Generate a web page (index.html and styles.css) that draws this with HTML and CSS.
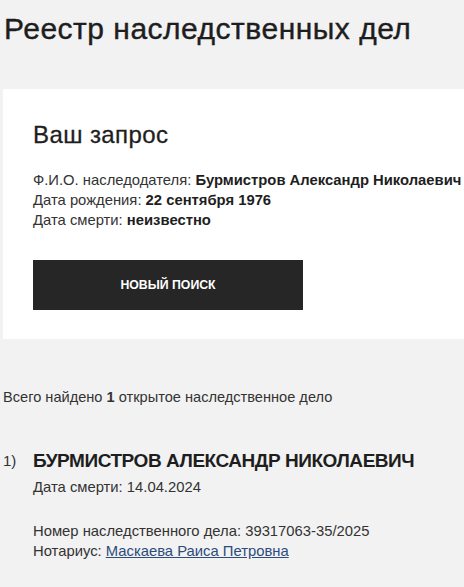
FILE: index.html
```html
<!DOCTYPE html>
<html lang="ru">
<head>
<meta charset="utf-8">
<link rel="stylesheet" href="styles.css">
</head>
<body>
<div class="page">
  <h1 class="title">Реестр наследственных дел</h1>
  <section class="card">
    <h2 class="card-title">Ваш запрос</h2>
    <div class="info">
      <div>Ф.И.О. наследодателя: <b>Бурмистров Александр Николаевич</b></div>
      <div>Дата рождения: <b>22 сентября 1976</b></div>
      <div>Дата смерти: <b>неизвестно</b></div>
    </div>
    <button class="btn">НОВЫЙ ПОИСК</button>
  </section>
  <p class="total">Всего найдено <b>1</b> открытое наследственное дело</p>
  <div class="case">
    <div class="case-num">1)</div>
    <div class="case-body">
      <div class="case-name">БУРМИСТРОВ АЛЕКСАНДР НИКОЛАЕВИЧ</div>
      <div class="case-line">Дата смерти: 14.04.2024</div>
      <div class="case-details">
        <div>Номер наследственного дела: 39317063-35/2025</div>
        <div>Нотариус: <a class="link" href="#">Маскаева Раиса Петровна</a></div>
      </div>
    </div>
  </div>
</div>
</body>
</html>
```
FILE: styles.css
```css
html, body {
  margin: 0;
  padding: 0;
  background: #f2f2f2;
  color: #222;
  font-family: "Liberation Sans", Arial, sans-serif;
}
.page {
  padding: 0 0 0 3px;
  overflow: hidden;
  width: 464px;
  box-sizing: border-box;
}
.title {
  margin: 0;
  padding: 12px 0 0 1px;
  font-size: 30px;
  font-weight: normal;
  letter-spacing: 0.5px;
  line-height: 34px;
  color: #1e1e1e;
  white-space: nowrap;
  -webkit-text-stroke: 0.4px #1e1e1e;
}
.card {
  margin-top: 43px;
  background: #fff;
  padding: 32px 0 29px 30px;
  width: 520px;
}
.card-title {
  margin: 0;
  font-size: 24px;
  font-weight: normal;
  letter-spacing: 0.4px;
  line-height: 28px;
  color: #1e1e1e;
  -webkit-text-stroke: 0.3px #1e1e1e;
}
.info {
  margin-top: 21px;
  font-size: 14.8px;
  line-height: 20px;
  color: #333;
  white-space: nowrap;
}
.info b {
  color: #1e1e1e;
}
.btn {
  display: block;
  margin-top: 30px;
  width: 270px;
  height: 50px;
  border: 0;
  background: #262626;
  color: #fff;
  font-family: "Liberation Sans", Arial, sans-serif;
  font-weight: bold;
  font-size: 12.3px;
}
.total {
  margin: 48px 0 0 0;
  font-size: 14.6px;
  line-height: 20px;
  color: #333;
}
.case {
  display: flex;
  margin-top: 41px;
}
.case-num {
  width: 30px;
  font-size: 15px;
  line-height: 26px;
  color: #333;
}
.case-name {
  font-size: 19px;
  font-weight: bold;
  letter-spacing: -0.45px;
  line-height: 26px;
  color: #1e1e1e;
  white-space: nowrap;
}
.case-line {
  margin-top: 3px;
  font-size: 14.8px;
  line-height: 20px;
  color: #333;
}
.case-details {
  margin-top: 24px;
  font-size: 14.8px;
  line-height: 20px;
  color: #333;
}
.link {
  color: #2c4c7c;
  text-decoration: underline;
}
```
